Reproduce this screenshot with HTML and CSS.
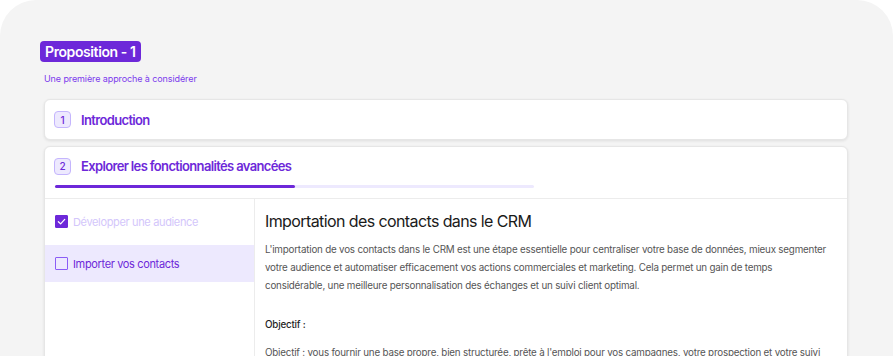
FILE: index.html
```html
<!DOCTYPE html>
<html lang="fr">
<head>
  <meta charset="UTF-8" />
  <meta name="viewport" content="width=device-width, initial-scale=1" />
  <title>Proposition - 1</title>
  <link rel="stylesheet" href="styles.css">
</head>
<body>
  <div class="panel">
    <div class="header">
      <span class="badge">Proposition - 1</span>
      <p class="subtitle">Une première approche à considérer</p>
    </div>

    <div class="card">
      <div class="card-head">
        <span class="num">1</span>
        <span class="card-title">Introduction</span>
      </div>
    </div>

    <div class="card open">
      <div class="card-head">
        <span class="num">2</span>
        <span class="card-title">Explorer les fonctionnalités avancées</span>
      </div>
      <div class="progress"><div class="progress-fill" style="width: 50%;"></div></div>

      <div class="card-body">
        <div class="steps">
          <div class="step done">
            <span class="check">
              <svg width="9" height="9" viewBox="0 0 10 10"><path d="M1.5 5.2 L4 7.6 L8.6 2.6" fill="none" stroke="#fff" stroke-width="1.4" stroke-linecap="round" stroke-linejoin="round"/></svg>
            </span>
            Développer une audience
          </div>
          <div class="step active">
            <span class="check"></span>
            Importer vos contacts
          </div>
        </div>

        <div class="content">
          <h2>Importation des contacts dans le CRM</h2>
          <p>L'importation de vos contacts dans le CRM est une étape essentielle pour centraliser votre base de données, mieux segmenter votre audience et automatiser efficacement vos actions commerciales et marketing. Cela permet un gain de temps<br>considérable, une meilleure personnalisation des échanges et un suivi client optimal.</p>
          <h3>Objectif :</h3>
          <p>Objectif : vous fournir une base propre, bien structurée, prête à l'emploi pour vos campagnes, votre prospection et votre suivi client.</p>
        </div>
      </div>
    </div>
  </div>
</body>
</html>
```

FILE: styles.css
```css
body {
  margin: 0;
  background: #ffffff;
  font-family: Inter, "Noto Sans", sans-serif;
  overflow: hidden;
}
.panel {
  background: #f4f4f4;
  border-radius: 36px 36px 0 0;
  width: 893px;
  height: 356px;
  box-sizing: border-box;
  padding: 41px 45px 0 44px;
}
.header {
  margin-left: -4px;
}
.badge {
  display: inline-block;
  background: #6d28d9;
  color: #fff;
  font-size: 14px;
  font-weight: 600;
  letter-spacing: -0.4px;
  line-height: 21px;
  padding: 0 5px;
  border-radius: 4px;
}
.subtitle {
  margin: 11px 0 0 4px;
  font-size: 9px;
  letter-spacing: -0.1px;
  line-height: 12px;
  color: #7c3aed;
}
.card {
  background: #fff;
  border: 1px solid #e6e6e6;
  border-radius: 6px;
  box-shadow: 0 1px 3px rgba(0, 0, 0, 0.09);
  margin-top: 14px;
}
.card + .card {
  margin-top: 6px;
}
.card-head {
  display: flex;
  align-items: center;
  gap: 10px;
  height: 39px;
  padding: 0 9px;
}
.open .card-head {
  height: 38px;
}
.num {
  width: 15px;
  height: 15px;
  border: 1px solid #c4b5fd;
  background: #ede9fe;
  border-radius: 4px;
  color: #6d28d9;
  font-size: 10px;
  font-weight: 500;
  display: flex;
  align-items: center;
  justify-content: center;
}
.card-title {
  color: #6d28d9;
  font-size: 13px;
  font-weight: 600;
  letter-spacing: -0.65px;
}
.progress {
  margin: 0 0 0 10px;
  width: 479px;
  height: 3px;
  background: #ede9fe;
  border-radius: 2px;
}
.progress-fill {
  height: 100%;
  background: #6d28d9;
  border-radius: 2px;
}
.card-body {
  display: flex;
  border-top: 1px solid #ececec;
  margin-top: 10px;
  height: 200px;
}
.steps {
  width: 209px;
  border-right: 1px solid #ececec;
  padding-top: 4px;
  display: flex;
  flex-direction: column;
  gap: 5px;
}
.step {
  display: flex;
  align-items: center;
  gap: 5px;
  height: 37px;
  padding-left: 10px;
  font-size: 11px;
  letter-spacing: -0.35px;
  color: #d3c6fb;
}
.step.active {
  background: #ede9fe;
  color: #6d28d9;
}
.check {
  width: 11px;
  height: 11px;
  border: 1.5px solid #8b5cf6;
  border-radius: 1px;
  display: flex;
  align-items: center;
  justify-content: center;
}
.done .check {
  background: #6d28d9;
  border-color: #6d28d9;
}
.content {
  flex: 1;
  padding: 10px 14px 0 10px;
}
.content h2 {
  margin: 0;
  font-size: 16px;
  font-weight: 400;
  letter-spacing: -0.6px;
  color: #1a1a1a;
  line-height: 24px;
}
.content p {
  margin: 8px 0 0;
  font-size: 9.8px;
  letter-spacing: -0.2px;
  line-height: 18px;
  color: #555;
}
.content h3 {
  margin: 21px 0 0;
  font-size: 9.8px;
  font-weight: 500;
  letter-spacing: -0.2px;
  color: #1f1f1f;
  line-height: 18px;
}
.content h3 + p {
  margin-top: 10px;
}
```
